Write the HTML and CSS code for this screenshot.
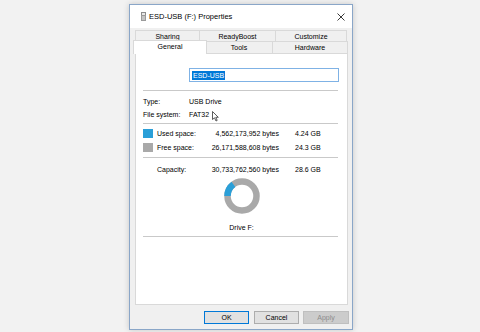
FILE: index.html
```html
<!DOCTYPE html>
<html>
<head>
<meta name="viewport" content="width=device-width, initial-scale=1">
<link rel="stylesheet" href="styles.css">
</head>
<body>

<div class="dialog">
  <div class="titlebar">
    <svg class="drive-icon" width="5" height="9" viewBox="0 0 5 9">
      <rect x="0.5" y="0.5" width="4" height="3" fill="#e8e8e8" stroke="#8c8c8c" stroke-width="1"/>
      <rect x="0" y="3" width="5" height="6" fill="#9a9a9a"/>
      <rect x="1" y="4" width="3" height="4" fill="#c4c4c4"/>
    </svg>
    <span class="title">ESD-USB (F:) Properties</span>
    <svg class="close" width="8" height="8" viewBox="0 0 8 8">
      <path d="M0.5 0.5 L7.5 7.5 M7.5 0.5 L0.5 7.5" stroke="#222" stroke-width="0.9" fill="none"/>
    </svg>
  </div>

  <div class="content">
    <div class="tabrow back">
      <div class="tab w64">Sharing</div>
      <div class="tab w76">ReadyBoost</div>
      <div class="tab w72">Customize</div>
    </div>
    <div class="tabrow front">
      <div class="tab selected">General</div>
      <div class="tab w67">Tools</div>
      <div class="tab w75">Hardware</div>
    </div>

    <div class="panel">
      <div class="name-row">
        <div class="name-input"><span class="sel">ESD-USB</span></div>
      </div>
      <div class="sep"></div>

      <div class="info">
        <div class="info-row"><span class="lbl">Type:</span><span>USB Drive</span></div>
        <div class="info-row"><span class="lbl">File system:</span><span>FAT32</span>
          <svg class="cursor" width="7" height="11" viewBox="0 0 7 11">
            <path d="M0.5 0.5 L0.5 8.5 L2.5 6.8 L4 10 L5.2 9.4 L3.8 6.3 L6.3 6.3 Z" fill="#fff" stroke="#333" stroke-width="0.8" stroke-linejoin="round"/>
          </svg>
        </div>
      </div>
      <div class="sep s2"></div>

      <div class="space">
        <span class="swatch used"></span><span>Used space:</span><span class="bytes">4,562,173,952 bytes</span><span class="gb">4.24 GB</span>
        <span class="swatch free"></span><span>Free space:</span><span class="bytes">26,171,588,608 bytes</span><span class="gb">24.3 GB</span>
      </div>
      <div class="sep s3"></div>

      <div class="space cap">
        <span></span><span>Capacity:</span><span class="bytes">30,733,762,560 bytes</span><span class="gb">28.6 GB</span>
      </div>

      <div class="donut">
        <svg width="36" height="36" viewBox="0 0 36 36">
          <circle cx="18" cy="18" r="14.5" fill="none" stroke="#a9a9a9" stroke-width="6.5"/>
          <circle cx="18" cy="18" r="14.5" fill="none" stroke="#2a9fd8" stroke-width="6.5"
                  stroke-dasharray="13.5 100" transform="rotate(180 18 18)"/>
        </svg>
      </div>
      <div class="drive-label">Drive F:</div>
      <div class="sep s4"></div>
    </div>

    <div class="buttons">
      <div class="btn default">OK</div>
      <div class="btn">Cancel</div>
      <div class="btn disabled">Apply</div>
    </div>
  </div>
</div>

</body>
</html>
```

FILE: styles.css
```css
* {
  box-sizing: border-box;
}

body {
  margin: 0;
  height: 332px;
  overflow: hidden;
  background: #f2f2f2;
  font-family: "Liberation Sans", Arial, sans-serif;
  font-size: 7px;
  color: #000;
}

.dialog {
  margin: 4px 0 0 129px;
  width: 224px;
  height: 326px;
  border: 1px solid #8aa6c8;
  background: #f0f0f0;
  box-shadow: 0 0 6px rgba(0, 0, 0, 0.18);
}

.titlebar {
  height: 23px;
  background: #fff;
  display: flex;
  align-items: center;
  padding: 0 7px 0 11px;
}

.drive-icon {
  margin-right: 3px;
}

.title {
  font-size: 7.5px;
  flex: 1;
}

.content {
  padding: 2px 5px 0 5px;
}

.tabrow {
  display: flex;
  height: 11px;
}

.tabrow.back .tab {
  padding-top: 2px;
}

.tabrow.front {
  height: 12px;
  align-items: flex-end;
  position: relative;
  z-index: 2;
}

.tab {
  height: 100%;
  border: 1px solid #d9d9d9;
  border-bottom: none;
  margin-right: -1px;
  display: flex;
  align-items: center;
  justify-content: center;
  background: #f0f0f0;
  line-height: 8px;
}

.w64 { width: 65px; }
.w76 { width: 77px; }
.w72 { width: 72px; }
.w67 { width: 68px; }
.w75 { width: 76px; }

.tab.selected {
  width: 74px;
  height: 14px;
  margin: 0 -2px -1px -2px;
  padding-bottom: 2px;
  background: #fff;
  border-color: #d9d9d9;
  position: relative;
  z-index: 3;
}

.panel {
  width: 213px;
  height: 252px;
  background: #fff;
  border: 1px solid #d9d9d9;
  padding: 14px 9px 0 7px;
  position: relative;
}

.name-row {
  padding-left: 46px;
}

.name-input {
  width: 150px;
  height: 14px;
  border: 1px solid #7fb2e5;
  display: flex;
  align-items: center;
  padding-left: 2px;
}

.sel {
  background: #0078d7;
  color: #fff;
  padding: 0 1px;
  line-height: 9px;
}

.sep {
  height: 1px;
  background: #c9c9c9;
  margin-top: 8px;
}

.info {
  margin-top: 4px;
}

.info-row {
  height: 13px;
  display: flex;
  align-items: center;
  position: relative;
}

.lbl {
  width: 46px;
}

.cursor {
  position: absolute;
  left: 69px;
  top: 3px;
}

.sep.s2 {
  margin-top: 2px;
}

.space {
  display: grid;
  grid-template-columns: 14px 53px 69px auto;
  grid-auto-rows: 14px;
  align-items: center;
  margin-top: 2px;
}

.space .bytes {
  text-align: right;
}

.space .gb {
  padding-left: 16px;
}

.swatch {
  width: 10px;
  height: 9px;
}

.swatch.used {
  background: #2a9fd8;
}

.swatch.free {
  background: #a9a9a9;
}

.sep.s3 {
  margin-top: 3px;
}

.space.cap {
  margin-top: 4px;
}

.donut {
  display: flex;
  justify-content: center;
  margin-top: 2px;
  padding-left: 2px;
}

.drive-label {
  text-align: center;
  margin-top: 9px;
  height: 10px;
  line-height: 10px;
  padding-left: 2px;
}

.sep.s4 {
  margin-top: 3px;
}

.buttons {
  display: flex;
  justify-content: flex-end;
  margin-top: 6px;
  margin-right: -2px;
  gap: 5px;
}

.btn {
  width: 45px;
  height: 13px;
  border: 1px solid #adadad;
  background: #e1e1e1;
  display: flex;
  align-items: center;
  justify-content: center;
}

.btn.default {
  border-color: #0078d7;
}

.btn.disabled {
  width: 46px;
  margin-left: -1px;
  background: #cccccc;
  border-color: #bfbfbf;
  color: #8c8c8c;
}
```
